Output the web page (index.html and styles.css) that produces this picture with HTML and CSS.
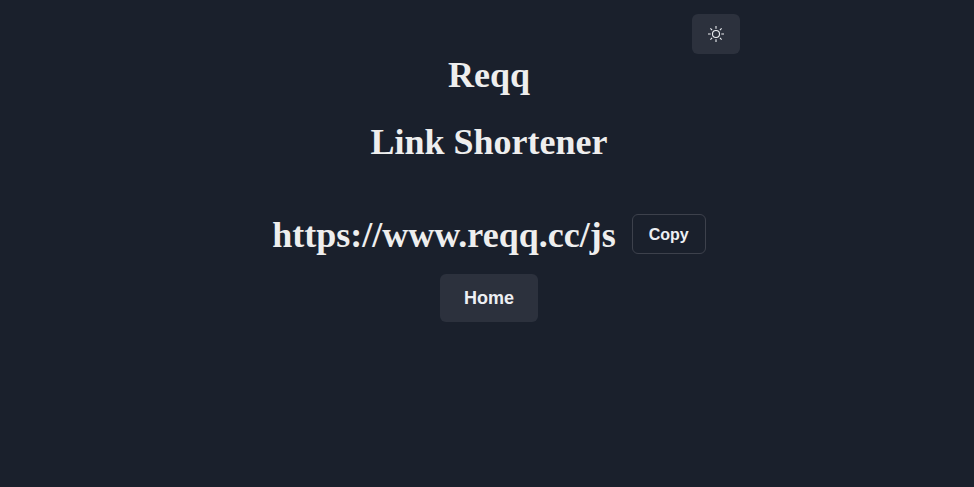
FILE: index.html
```
<!DOCTYPE html>
<html lang="en">
<head>
<meta charset="utf-8">
<meta name="viewport" content="width=device-width, initial-scale=1">
<title>Reqq Link Shortener</title>
<link rel="stylesheet" href="styles.css">
</head>
<body>
<div class="page">
  <header class="toolbar">
    <button class="button button-solid" type="button" aria-label="Toggle color mode">
      <svg class="icon" viewBox="0 0 16 16" aria-hidden="true" fill="none" stroke="currentColor">
        <circle cx="8" cy="8" r="3.500" stroke-width="1.100"/>
        <path stroke-width="1.100" d="M8 0v2.700M8 13.300v2.700M0 8h2.700M13.300 8h2.700M2.400 2.400l1.700 1.700M11.900 11.900l1.700 1.700M2.400 13.600l1.700-1.700M11.900 4.100l1.700-1.700"/>
      </svg>
    </button>
  </header>
  <main class="content">
    <h1 class="heading">Reqq</h1>
    <h2 class="heading">Link Shortener</h2>
    <div class="result">
      <p class="heading">https://www.reqq.cc/js</p>
      <button class="button button-outline" type="button">Copy</button>
    </div>
    <a class="button button-solid button-large" href="#">Home</a>
  </main>
</div>
</body>
</html>
```

FILE: styles.css
```
* {
  box-sizing: border-box;
}

body {
  margin: 0;
  min-height: 100vh;
  background: #1a202c;
  color: #eeeeee;
  font-family: "Liberation Sans", Arial, sans-serif;
}

.page {
  max-width: 506px;
  margin: 0 auto;
  padding: 14px 0 0 4px;
}

.toolbar {
  display: flex;
  justify-content: flex-end;
}

.content {
  display: flex;
  flex-direction: column;
  align-items: center;
}

.heading {
  margin: 0;
  font: 700 36px/43px "Liberation Serif", "Times New Roman", serif;
}

h2.heading {
  margin-top: 24px;
}

.result {
  display: flex;
  align-items: flex-start;
  gap: 16px;
  margin: 50px 0 17px;
}

.button {
  display: inline-flex;
  align-items: center;
  justify-content: center;
  height: 40px;
  padding: 0 16px;
  border: 0;
  border-radius: 6px;
  background: transparent;
  color: #edeff3;
  font: 600 16px/19px "Liberation Sans", Arial, sans-serif;
  text-decoration: none;
  cursor: pointer;
}

.button-solid {
  background: #2c313d;
}

.button-outline {
  border: 1px solid #3d414c;
}

.button-large {
  height: 48px;
  padding: 0 24px;
  font-size: 18px;
  line-height: 22px;
}

.icon {
  width: 16px;
  height: 16px;
}
```
